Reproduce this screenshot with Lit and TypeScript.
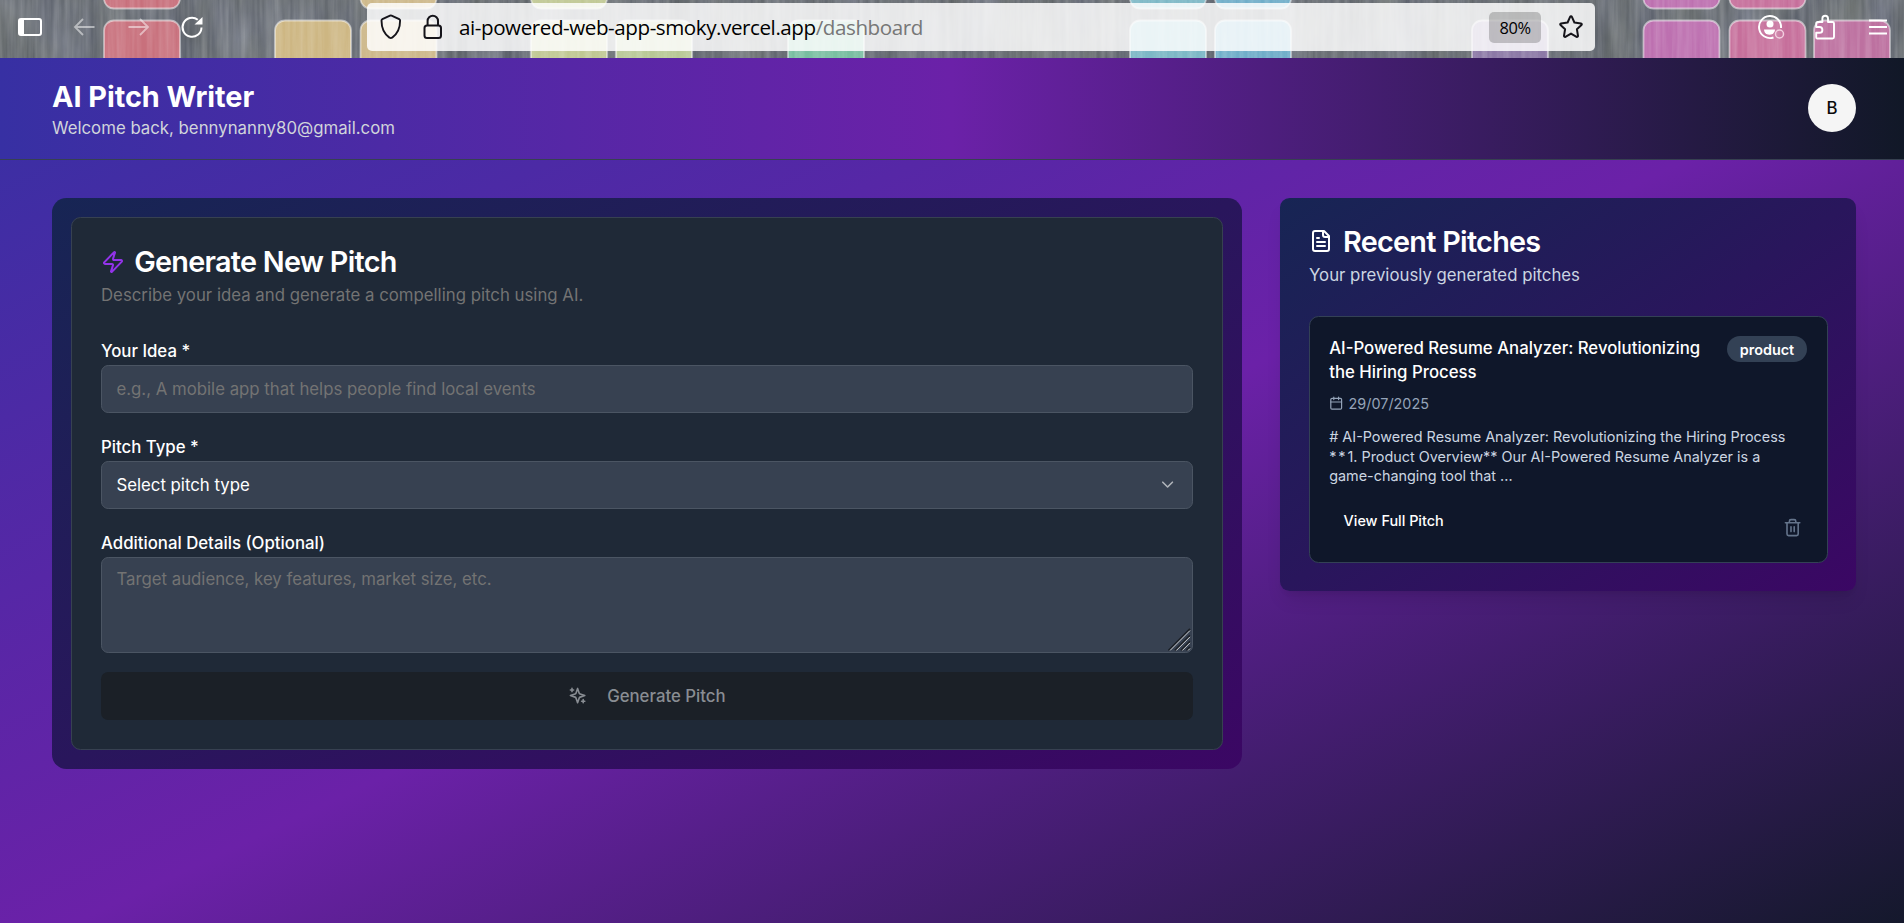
import { LitElement, html, css, svg } from "lit";
import { customElement } from "lit/decorators.js";

const box = css`
  *, *::before, *::after { box-sizing: border-box; }
  :host { font-family: Inter, "Open Sans", sans-serif; }
  h1, h2, h3, p { margin: 0; }
  svg { display: block; flex: none; }
`;

/* Coloured wooden tiles of the browser theme: x, fill, whether a tile shows above it */
const tiles: Array<[number, string, boolean]> = [
  [104, "#c8707c", true],
  [275, "#cdb682", false],
  [360.5, "#cdb88a", true],
  [531, "#c0c894", true],
  [616, "#b8c896", false],
  [788, "#78bea0", false],
  [1130, "#7db8c6", true],
  [1215, "#70aec9", true],
  [1472, "#8c79a6", false],
  [1643.5, "#bd70b0", true],
  [1729.5, "#c66f9b", true],
  [1814, "#bd71a0", false],
];

@customElement("browser-bar")
export class BrowserBar extends LitElement {
  static styles = [box, css`
    :host { display: block; height: 58px; position: relative; overflow: hidden; background: #6b6f74; font-family: "Open Sans", "Noto Sans", sans-serif; }
    .theme { position: absolute; inset: 0; width: 1904px; height: 58px; }
    .row { position: relative; display: flex; align-items: center; height: 54px; padding-left: 18px; color: #fff; }
    .panel { margin-right: 31px; }
    .dim { opacity: .5; }
    .back { margin-right: 33px; }
    .forward { margin-right: 30px; }
    .address { display: flex; align-items: center; width: 1228px; height: 48px; margin: 0 0 0 163px; padding-left: 10px; border-radius: 5px; background: rgba(255,255,255,.84); color: #15141a; }
    .lock { margin-left: 20px; }
    .url { margin: -1px auto 0 16px; font-size: 20.6px; letter-spacing: -.43px; white-space: nowrap; color: #000; }
    .path { color: #777; }
    .zoom { width: 52px; height: 31px; border-radius: 5px; background: rgba(0,0,0,.2); font-size: 16.4px; line-height: 31px; text-align: center; letter-spacing: -.4px; margin-right: 17px; color: #000; }
    .star { margin-right: 11px; }
    .tools { display: flex; align-items: center; margin-left: 162px; }
    .puzzle { margin-left: 30px; }
    .menu { margin-left: 34px; }
  `];

  render() {
    return html`
      <svg class="theme" viewBox="0 0 1904 58" preserveAspectRatio="none">
        <defs>
          <filter id="grain" x="0" y="0" width="100%" height="100%" color-interpolation-filters="sRGB">
            <feTurbulence type="fractalNoise" baseFrequency="0.03 0.012" numOctaves="4" seed="7"></feTurbulence>
            <feColorMatrix type="matrix" values="0.2 0 0 0 0.305  0.2 0 0 0 0.325  0.2 0.08 0 0 0.31  0 0 0 0 1"></feColorMatrix>
          </filter>
          <filter id="veil" x="0" y="0" width="100%" height="100%" color-interpolation-filters="sRGB">
            <feTurbulence type="fractalNoise" baseFrequency="0.2 0.01" numOctaves="3" seed="3"></feTurbulence>
            <feColorMatrix type="matrix" values="0 0 0 0 1  0 0 0 0 1  0 0 0 0 1  0.5 0 0 0 -0.14"></feColorMatrix>
          </filter>
        </defs>
        <rect width="1904" height="58" filter="url(#grain)"></rect>
        ${tiles.map(([x, fill, above]) => svg`
          <rect x=${x} y="20.5" width="76" height="60" rx="10" fill=${fill} stroke="#fff" stroke-opacity=".5" stroke-width="1.8"/>
          ${above ? svg`<rect x=${x} y="-50" width="76" height="58.5" rx="10" fill=${fill} stroke="#fff" stroke-opacity=".5" stroke-width="1.8"/>` : ""}
        `)}
        <rect width="1904" height="58" filter="url(#veil)" opacity=".6"></rect>
      </svg>
      <div class="row">
        <svg class="panel" width="24" height="18" viewBox="0 0 24 18"><rect x="1" y="1" width="22" height="16" rx="2" fill="none" stroke="currentColor" stroke-width="2"/><path d="M1 1h5v16H1z" fill="currentColor"/></svg>
        <svg class="back dim" width="22" height="18" viewBox="0 0 22 18" fill="none" stroke="currentColor" stroke-width="1.8"><path d="M21.5 9H2M10 1 2 9l8 8"/></svg>
        <svg class="forward dim" width="22" height="18" viewBox="0 0 22 18" fill="none" stroke="currentColor" stroke-width="1.8"><path d="M.5 9H20M12 1l8 8-8 8"/></svg>
        <svg width="24" height="24" viewBox="0 0 24 24"><path d="M21.500 12.500A9.500 9.500 0 1 1 17.800 4.800" fill="none" stroke="currentColor" stroke-width="2"/><path d="M22.500 2V9.500h-8z" fill="currentColor"/></svg>
        <div class="address">
          <svg width="26" height="28" viewBox="0 0 26 28" fill="none" stroke="currentColor" stroke-width="1.900" stroke-linejoin="round"><path d="M14.600 2.700a2 2 0 0 0-1.600 0L5.400 6.200a1.600 1.600 0 0 0-.9 1.400c0 6.800 2.900 13.600 7.900 17a2.400 2.400 0 0 0 2.800 0c5-3.400 7.900-10.200 7.900-17a1.600 1.600 0 0 0-.9-1.400z"/></svg>
          <svg class="lock" width="20" height="28" viewBox="0 0 20 28" fill="none" stroke="currentColor" stroke-width="2"><rect x="1.500" y="12.500" width="16.500" height="12.500" rx="2.500"/><path d="M4.600 12.500V8a5.200 5.200 0 0 1 10.400 0v4.500"/></svg>
          <div class="url">ai-powered-web-app-smoky.vercel.app<span class="path">/dashboard</span></div>
          <div class="zoom">80%</div>
          <svg class="star" width="26" height="26" viewBox="0 0 26 26" fill="none" stroke="currentColor" stroke-width="2" stroke-linejoin="round"><path d="M12.100 2.900a1 1 0 0 1 1.800 0l2.500 5.600 6.600.9a1 1 0 0 1 .5 1.700l-4.600 4.100 1.100 6.700a1 1 0 0 1-1.400 1L13 19.600l-5.600 3.300a1 1 0 0 1-1.400-1l1.100-6.700-4.600-4.100A1 1 0 0 1 3 9.400l6.600-.9z"/></svg>
        </div>
        <div class="tools">
          <svg width="28" height="26" viewBox="0 0 28 26"><path d="M16.500 23.500A11 11 0 1 1 24 14" fill="none" stroke="currentColor" stroke-width="1.900"/><circle cx="13" cy="10" r="3.500" fill="currentColor"/><path d="M7 15.500h11c0 1.500-.8 3.500-3 4.800-1.500.6-3.500.6-5 0C8 19.300 7 17.500 7 15.500z" fill="currentColor"/><circle cx="22.500" cy="20" r="4" fill="none" stroke="#f3cfe0" stroke-width="1.500"/></svg>
          <svg class="puzzle" width="20" height="26" viewBox="0 0 20 26" fill="none" stroke="currentColor" stroke-width="1.900" stroke-linejoin="round"><path d="M2 24.500h15.500a1.500 1.500 0 0 0 1.500-1.500V9.500A1.500 1.500 0 0 0 17.500 8H13V4.500a2.800 2.800 0 0 0-5.600 0V8H2.500A1.300 1.300 0 0 0 1.200 9.300V13h3.300a2.900 2.900 0 0 1 0 5.800H1.200v4.500c0 .7.300 1.200.8 1.200z"/></svg>
          <svg class="menu" width="18" height="16" viewBox="0 0 18 16" stroke="currentColor" stroke-width="1.800"><path d="M0 1.500h18M0 8h18M0 14.500h18"/></svg>
        </div>
      </div>`;
  }
}

@customElement("site-header")
export class SiteHeader extends LitElement {
  static styles = [box, css`
    :host { display: flex; justify-content: space-between; align-items: flex-start; height: 102px; padding: 19.200px 48px 0 52px; border-bottom: 1px solid #374151; background: linear-gradient(to right, #3730a3, #6b21a8, #111827); }
    .title { padding-top: 1px; font-size: 28.800px; line-height: 37.400px; font-weight: 700; letter-spacing: -.03px; color: #fff; }
    .welcome { font-size: 16.800px; line-height: 24px; color: #d1d5db; }
    .avatar { width: 48px; height: 48px; margin-top: 6.800px; border-radius: 50%; background: #f5f5f5; color: #0a0a0a; font-size: 16.800px; font-weight: 500; line-height: 48px; text-align: center; }
  `];
  render() {
    return html`
      <div><h1 class="title">AI Pitch Writer</h1><p class="welcome">Welcome back, bennynanny80@gmail.com</p></div>
      <div class="avatar">B</div>`;
  }
}

@customElement("pitch-form")
export class PitchForm extends LitElement {
  static styles = [box, css`
    :host { display: block; height: 571px; padding: 19px; border-radius: 14.400px; background: linear-gradient(to bottom right, #172554, #3b0764); }
    .card { height: 533px; padding: 28px 29px 29px; border: 1px solid #374151; border-radius: 9.600px; background: #1f2937; }
    .heading { display: flex; align-items: center; gap: 9.600px; height: 29px; margin: 1px 0 0 -.4px; color: #fff; font-size: 28.800px; font-weight: 600; letter-spacing: -.72px; line-height: 29px; }
    .bolt { color: #9333ea; }
    .hint { margin-top: 7px; font-size: 16.800px; line-height: 24px; color: #737373; }
    .label { display: block; font-size: 16.800px; font-weight: 500; line-height: 24px; height: 26px; color: #fff; }
    .field { height: 48px; display: flex; align-items: center; justify-content: space-between; padding: 0 15px 0 14.400px; border: 1px solid #4b5563; border-radius: 7.200px; background: #374151; font-size: 16.800px; color: #fff; margin-bottom: 22px; }
    .first { margin-top: 32px; }
    .placeholder { color: #737373; }
    .area { position: relative; height: 96px; align-items: flex-start; padding-top: 9px; line-height: 24px; margin-bottom: 19px; }
    .grip { position: absolute; right: 1px; bottom: 1px; }
    .chevron { opacity: .6; }
    .submit { display: flex; align-items: center; justify-content: center; gap: 19.600px; height: 48px; border-radius: 7.200px; background: #1b2027; color: #898d93; font-size: 16.800px; font-weight: 500; }
  `];
  render() {
    return html`
      <div class="card">
        <h2 class="heading"><svg class="bolt" width="24" height="24" viewBox="0 0 24 24" fill="none" stroke="currentColor" stroke-width="2" stroke-linecap="round" stroke-linejoin="round"><path d="M4 14a1 1 0 0 1-.78-1.630l9.900-10.200a.5.5 0 0 1 .86.460l-1.920 6.020A1 1 0 0 0 13 10h7a1 1 0 0 1 .78 1.630l-9.900 10.200a.5.5 0 0 1-.86-.460l1.920-6.020A1 1 0 0 0 11 14z"/></svg>Generate New Pitch</h2>
        <p class="hint">Describe your idea and generate a compelling pitch using AI.</p>
        <label class="label first">Your Idea *</label>
        <div class="field placeholder">e.g., A mobile app that helps people find local events</div>
        <label class="label">Pitch Type *</label>
        <div class="field">Select pitch type<svg class="chevron" width="19.200" height="19.200" viewBox="0 0 24 24" fill="none" stroke="currentColor" stroke-width="2" stroke-linecap="round" stroke-linejoin="round"><path d="m6 9 6 6 6-6"/></svg></div>
        <label class="label">Additional Details (Optional)</label>
        <div class="field area placeholder">Target audience, key features, market size, etc.
          <svg class="grip" width="23" height="23" viewBox="0 0 23 23" fill="none"><path d="M.5 22.500 22 1M7 22.500 22 7.500M13 22.500l9-9M18.500 22.500 22 19" stroke="#1b1f26" stroke-width="1.800"/><path d="M2 22.500 22 2.500M8.300 22.500 22 8.800M14.300 22.500 22 14.800M20 22.500l2-2" stroke="#d5d7da" stroke-width="1"/></svg>
        </div>
        <div class="submit"><svg width="19.200" height="19.200" viewBox="0 0 24 24" fill="none" stroke="currentColor" stroke-width="2" stroke-linecap="round" stroke-linejoin="round"><path d="m12 3-1.912 5.813a2 2 0 0 1-1.275 1.275L3 12l5.813 1.912a2 2 0 0 1 1.275 1.275L12 21l1.912-5.813a2 2 0 0 1 1.275-1.275L21 12l-5.813-1.912a2 2 0 0 1-1.275-1.275L12 3ZM5 3v4M19 17v4M3 5h4M17 19h4"/></svg>Generate Pitch</div>
      </div>`;
  }
}

@customElement("recent-pitches")
export class RecentPitches extends LitElement {
  static styles = [box, css`
    :host { display: block; height: 393px; padding: 29px; border-radius: 9.600px; background: linear-gradient(to bottom right, #172554, #3b0764); box-shadow: 0 12px 18px -4px rgba(0,0,0,.1), 0 5px 7px -5px rgba(0,0,0,.1); }
    .heading { display: flex; align-items: center; gap: 10px; height: 29px; color: #fff; font-size: 28.800px; font-weight: 600; letter-spacing: -.72px; line-height: 29px; }
    .icon { margin-top: -2px; }
    .hint { margin-top: 7px; font-size: 16.800px; line-height: 24px; color: #cbd5e1; }
    .card { width: 519px; height: 247px; margin-top: 29px; padding: 19px 20px 19px 19.200px; border: 1px solid #334155; border-radius: 9.600px; background: #0f172a; }
    .top { display: flex; justify-content: space-between; align-items: flex-start; }
    .name { width: 380px; font-size: 16.800px; font-weight: 500; line-height: 24px; color: #fff; }
    .badge { height: 26px; width: 80px; text-align: center; border-radius: 13px; background: #334155; color: #fff; font-size: 14.400px; line-height: 27px; font-weight: 600; }
    .date { display: flex; align-items: center; gap: 5px; height: 19px; margin-top: 10px; font-size: 14.400px; color: #94a3b8; }
    .text { margin-top: 14px; font-size: 14.400px; line-height: 19.600px; color: #cbd5e1; white-space: nowrap; }
    .stars { letter-spacing: 1.900px; }
    .actions { display: flex; justify-content: space-between; margin-top: 24px; padding: 0 5px 0 14.400px; color: #fff; font-size: 14.400px; font-weight: 500; line-height: 19px; }
    .view { margin-top: 1px; }
    .trash { color: #64748b; margin-top: 8px; }
  `];
  render() {
    return html`
      <h2 class="heading"><svg class="icon" width="24" height="24" viewBox="0 0 24 24" fill="none" stroke="currentColor" stroke-width="2" stroke-linecap="round" stroke-linejoin="round"><path d="M15 2H6a2 2 0 0 0-2 2v16a2 2 0 0 0 2 2h12a2 2 0 0 0 2-2V7Z"/><path d="M14 2v4a2 2 0 0 0 2 2h4M10 9H8M16 13H8M16 17H8"/></svg>Recent Pitches</h2>
      <p class="hint">Your previously generated pitches</p>
      <div class="card">
        <div class="top"><h3 class="name">AI-Powered Resume Analyzer: Revolutionizing the Hiring Process</h3><span class="badge">product</span></div>
        <div class="date"><svg width="14.400" height="14.400" viewBox="0 0 24 24" fill="none" stroke="currentColor" stroke-width="2" stroke-linecap="round" stroke-linejoin="round"><path d="M8 2v4M16 2v4M3 10h18"/><rect width="18" height="18" x="3" y="4" rx="2"/></svg>29/07/2025</div>
        <p class="text"># AI-Powered Resume Analyzer: Revolutionizing the Hiring Process<br><span class="stars">**</span>1. Product Overview** Our AI-Powered Resume Analyzer is a<br>game-changing tool that ...</p>
        <div class="actions"><span class="view">View Full Pitch</span><svg class="trash" width="19.200" height="19.200" viewBox="0 0 24 24" fill="none" stroke="currentColor" stroke-width="2" stroke-linecap="round" stroke-linejoin="round"><path d="M3 6h18M19 6v14c0 1-1 2-2 2H7c-1 0-2-1-2-2V6M8 6V4c0-1 1-2 2-2h4c1 0 2 1 2 2v2M10 11v6M14 11v6"/></svg></div>
      </div>`;
  }
}

@customElement("app-root")
export class AppRoot extends LitElement {
  static styles = [box, css`
    :host { display: block; height: 923px; overflow: hidden; }
    .page { height: 900px; background: linear-gradient(to bottom right, #3730a3, #6b21a8, #111827); }
    .columns { display: grid; grid-template-columns: 1190px 576px; gap: 38px; align-items: start; padding: 38px 48px 0 52px; }
  `];
  render() {
    return html`
      <browser-bar></browser-bar>
      <div class="page">
        <site-header></site-header>
        <main class="columns"><pitch-form></pitch-form><recent-pitches></recent-pitches></main>
      </div>`;
  }
}
